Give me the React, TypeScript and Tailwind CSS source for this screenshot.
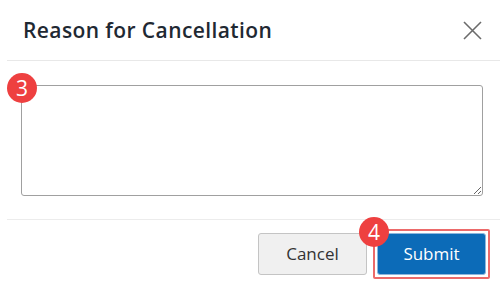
import React from 'react';

function StepBadge({ n, className = '' }: { n: number; className?: string }) {
  return (
    <div
      className={`absolute flex h-[30px] w-[30px] items-center justify-center rounded-full bg-[#ee4040] text-[21px] leading-none text-white ${className}`}
    >
      {n}
    </div>
  );
}

export default function App() {
  return (
    <div
      className="h-[286px] w-[500px] overflow-hidden bg-white pl-[7px]"
      style={{ fontFamily: '"Open Sans", Lato, sans-serif' }}
    >
      {/* Header */}
      <div className="flex h-[61px] items-center justify-between border-b border-[#e8e8e8] pl-[16px] pr-[18px]">
        <h2 className="pt-[1px] text-[21px] font-semibold tracking-[0.4px] text-[#1f2933]">Reason for Cancellation</h2>
        <button aria-label="Close" className="text-[#6b6b6b]">
          <svg width="19" height="19" viewBox="0 0 19 19" fill="none" stroke="currentColor" strokeWidth="1.6">
            <path d="M1 1L18 18M18 1L1 18" />
          </svg>
        </button>
      </div>

      {/* Body */}
      <div className="relative pb-[23px] pl-[14px] pr-[17px] pt-[24px]">
        <StepBadge n={3} className="left-0 top-[12px]" />
        <textarea className="block h-[111px] w-full resize-y rounded-[3px] border border-[#a0a0a0] p-2 text-[15px] outline-none" />
      </div>

      {/* Footer */}
      <div className="relative flex justify-end gap-[10px] border-t border-[#ececec] pr-[14px] pt-[13px]">
        <button className="h-[42px] w-[109px] rounded-[3px] border border-[#c4c4c4] bg-[#f0f0f0] text-[17px] text-[#333]">
          Cancel
        </button>
        <div className="relative">
          <div className="absolute -inset-[4px] rounded-[2px] border-2 border-[#ec6a6a]" />
          <button className="h-[42px] w-[109px] rounded-[3px] border border-[#8fb6dc] bg-[#0c6bb8] text-[17px] text-white">
            Submit
          </button>
          <StepBadge n={4} className="-left-[18px] -top-[16px]" />
        </div>
      </div>
    </div>
  );
}
